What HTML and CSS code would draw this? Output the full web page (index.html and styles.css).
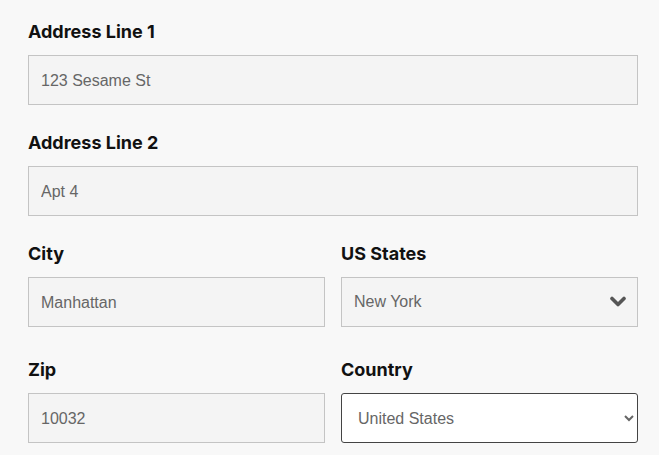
FILE: index.html
```html
<!DOCTYPE html>
<html lang="en">

<head>
    <meta charset="UTF-8">
    <meta name="viewport" content="width=device-width, initial-scale=1.0">
    <title>Address</title>
    <link rel="stylesheet" href="styles.css">
</head>

<body>
    <form class="address-form">
        <div class="form-group">
            <label for="line1">Address Line 1</label>
            <input type="text" id="line1" value="123 Sesame St">
        </div>

        <div class="form-group">
            <label for="line2">Address Line 2</label>
            <input type="text" id="line2" value="Apt 4">
        </div>

        <div class="form-row">
            <div class="form-group">
                <label for="city">City</label>
                <input type="text" id="city" value="Manhattan">
            </div>
            <div class="form-group">
                <label for="state">US States</label>
                <div class="select-wrap">
                    <select id="state" class="custom-select">
                        <option>New York</option>
                    </select>
                    <svg class="chevron" width="16" height="11" viewBox="0 0 16 11">
                        <path d="M2 2.5 L8 8.5 L14 2.5" fill="none" stroke="#555" stroke-width="3.6" stroke-linecap="round" stroke-linejoin="round"/>
                    </svg>
                </div>
            </div>
        </div>

        <div class="form-row last-row">
            <div class="form-group">
                <label for="zip">Zip</label>
                <input type="text" id="zip" value="10032">
            </div>
            <div class="form-group">
                <label for="country">Country</label>
                <select id="country" class="native-select">
                    <option>United States</option>
                </select>
            </div>
        </div>
    </form>
</body>

</html>
```

FILE: styles.css
```css
body {
    margin: 0;
    background-color: #f8f8f8;
    font-family: Inter, "Liberation Sans", sans-serif;
}

.address-form {
    width: 610px;
    margin-left: 28px;
    padding-top: 19px;
}

.form-group {
    margin-bottom: 25px;
}

.form-row {
    display: grid;
    grid-template-columns: 1fr 1fr;
    gap: 16px;
}

.last-row {
    margin-top: 5px;
}

label {
    display: block;
    height: 26px;
    line-height: 26px;
    margin-bottom: 10px;
    font-size: 18px;
    font-weight: bold;
    color: #111;
}

input[type="text"],
.custom-select {
    display: block;
    box-sizing: border-box;
    width: 100%;
    height: 50px;
    padding: 2px 12px 0;
    border: 1px solid #c4c4c4;
    border-radius: 0;
    background: #f4f4f4;
    font-family: "Liberation Sans", Arial, sans-serif;
    font-size: 16px;
    color: #666;
    outline: none;
}

.select-wrap {
    position: relative;
}

.custom-select {
    appearance: none;
    -webkit-appearance: none;
    padding-top: 0;
    padding-bottom: 2px;
}

.chevron {
    position: absolute;
    right: 12px;
    top: 19px;
    pointer-events: none;
}

.native-select {
    display: block;
    box-sizing: border-box;
    width: 100%;
    height: 50px;
    padding: 0 8px 0 12px;
    border: 1px solid #444;
    border-radius: 3px;
    background: #fff;
    font-family: "Liberation Sans", Arial, sans-serif;
    font-size: 16px;
    color: #666;
}
```
